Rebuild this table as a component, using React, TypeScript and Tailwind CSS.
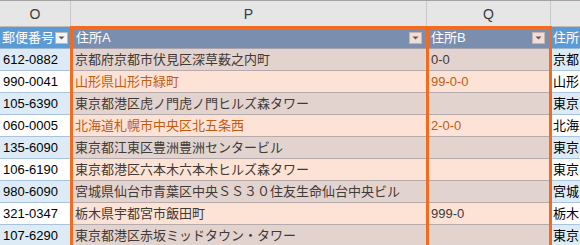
import React from "react";

type Row = { o: string; p: string; q: string; r: string; orange?: boolean };

const rows: Row[] = [
  { o: "612-0882", p: "京都府京都市伏見区深草薮之内町", q: "0-0", r: "京都" },
  { o: "990-0041", p: "山形県山形市緑町", q: "99-0-0", r: "山形", orange: true },
  { o: "105-6390", p: "東京都港区虎ノ門虎ノ門ヒルズ森タワー", q: "", r: "東京" },
  { o: "060-0005", p: "北海道札幌市中央区北五条西", q: "2-0-0", r: "北海", orange: true },
  { o: "135-6090", p: "東京都江東区豊洲豊洲センタービル", q: "", r: "東京" },
  { o: "106-6190", p: "東京都港区六本木六本木ヒルズ森タワー", q: "", r: "東京" },
  { o: "980-6090", p: "宮城県仙台市青葉区中央ＳＳ３０住友生命仙台中央ビル", q: "", r: "宮城" },
  { o: "321-0347", p: "栃木県宇都宮市飯田町", q: "999-0", r: "栃木" },
  { o: "107-6290", p: "東京都港区赤坂ミッドタウン・タワー", q: "", r: "東京" },
];

function FilterBtn({ pink }: { pink?: boolean }) {
  return (
    <div
      className={
        pink
          ? "flex h-[12px] w-[13px] shrink-0 items-center justify-center border border-[#c9b5ae] bg-[#f3ddd5]"
          : "flex h-[12px] w-[13px] shrink-0 items-center justify-center border border-[#b9b9b9] bg-[#f4f4f4]"
      }
    >
      <svg width="9" height="6" viewBox="0 0 9 6">
        <polygon points="1.5,1.5 7.5,1.5 4.5,4.5" fill="#5a5a5a" />
      </svg>
    </div>
  );
}

export default function App() {
  return (
    <div
      className="relative h-[245px] w-[580px] overflow-hidden bg-white text-[13px]"
      style={{ fontFamily: '"Liberation Sans", "Noto Sans CJK JP", sans-serif' }}
    >
      {/* column letters */}
      <div className="flex h-[27px] border-t border-b border-t-[#a3a3a3] border-b-[#bdbdbd] bg-[#e6e6e6] text-[14px] text-[#3a3a3a]">
        <div className="flex w-[71px] shrink-0 items-center justify-center border-r border-[#c8c8c8] pt-[2px]">O</div>
        <div className="flex w-[356px] shrink-0 items-center justify-center border-r border-[#c8c8c8] pt-[2px]">P</div>
        <div className="flex w-[124px] shrink-0 items-center justify-center border-r border-[#c8c8c8] pt-[2px]">Q</div>
        <div className="flex-1" />
      </div>

      {/* table header row */}
      <div className="flex h-[22px] text-white">
        <div className="flex w-[71px] shrink-0 items-center justify-between overflow-hidden border-b border-[#9bb8d8] bg-[#5b9bd5] pl-[2px] pr-[3px] pt-[1px]">
          <span className="whitespace-nowrap">郵便番号</span>
          <FilterBtn />
        </div>
        <div className="flex w-[356px] shrink-0 items-center justify-between border-b border-[#a6a3ad] bg-[#7a8eb0] pl-[5px] pr-[5px] pt-[1px]">
          <span className="whitespace-nowrap">住所A</span>
          <FilterBtn pink />
        </div>
        <div className="flex w-[124px] shrink-0 items-center justify-between border-b border-[#a6a3ad] bg-[#7a8eb0] pl-[4px] pr-[6px] pt-[1px]">
          <span className="whitespace-nowrap">住所B</span>
          <FilterBtn pink />
        </div>
        <div className="flex flex-1 items-center overflow-hidden border-b border-[#9bb8d8] bg-[#5b9bd5] pl-[2px] pt-[1px]">
          <span className="whitespace-nowrap">住所</span>
        </div>
      </div>

      {/* data rows */}
      {rows.map((r, i) => {
        const odd = i % 2 === 0;
        return (
          <div key={i} className="flex h-[22px]">
            <div
              className={
                odd
                  ? "flex w-[71px] shrink-0 items-center overflow-hidden border-b border-[#a9c3df] bg-[#ddebf7] pl-[3px] pt-[1px] text-black"
                  : "flex w-[71px] shrink-0 items-center overflow-hidden border-b border-[#a9c3df] bg-white pl-[3px] pt-[1px] text-black"
              }
            >
              <span className="whitespace-nowrap">{r.o}</span>
            </div>
            <div
              className={
                odd
                  ? "flex w-[356px] shrink-0 items-center overflow-hidden border-b border-[#b5abaa] bg-[#e3d3ce] pl-[4px] pt-[1px]"
                  : "flex w-[356px] shrink-0 items-center overflow-hidden border-b border-[#b5abaa] bg-[#fce3d6] pl-[4px] pt-[1px]"
              }
            >
              <span className={r.orange ? "whitespace-nowrap text-[#c55a11]" : "whitespace-nowrap text-[#3f3a38]"}>{r.p}</span>
            </div>
            <div
              className={
                odd
                  ? "flex w-[124px] shrink-0 items-center overflow-hidden border-b border-[#b5abaa] bg-[#e3d3ce] pl-[4px] pt-[1px]"
                  : "flex w-[124px] shrink-0 items-center overflow-hidden border-b border-[#b5abaa] bg-[#fce3d6] pl-[4px] pt-[1px]"
              }
            >
              <span className={r.orange ? "whitespace-nowrap text-[#c55a11]" : "whitespace-nowrap text-[#3f3a38]"}>{r.q}</span>
            </div>
            <div
              className={
                odd
                  ? "flex flex-1 items-center overflow-hidden border-b border-[#a9c3df] bg-[#ddebf7] pl-[2px] pt-[1px] text-black"
                  : "flex flex-1 items-center overflow-hidden border-b border-[#a9c3df] bg-white pl-[2px] pt-[1px] text-black"
              }
            >
              <span className="whitespace-nowrap">{r.r}</span>
            </div>
          </div>
        );
      })}

      {/* selection outlines (overlay) */}
      <div className="pointer-events-none absolute left-[70px] top-[26px] h-[300px] w-[359px] border-[3px] border-[#f26b21]" />
      <div className="pointer-events-none absolute left-[426px] top-[26px] h-[300px] w-[126px] border-[3px] border-[#f26b21]" />
    </div>
  );
}
